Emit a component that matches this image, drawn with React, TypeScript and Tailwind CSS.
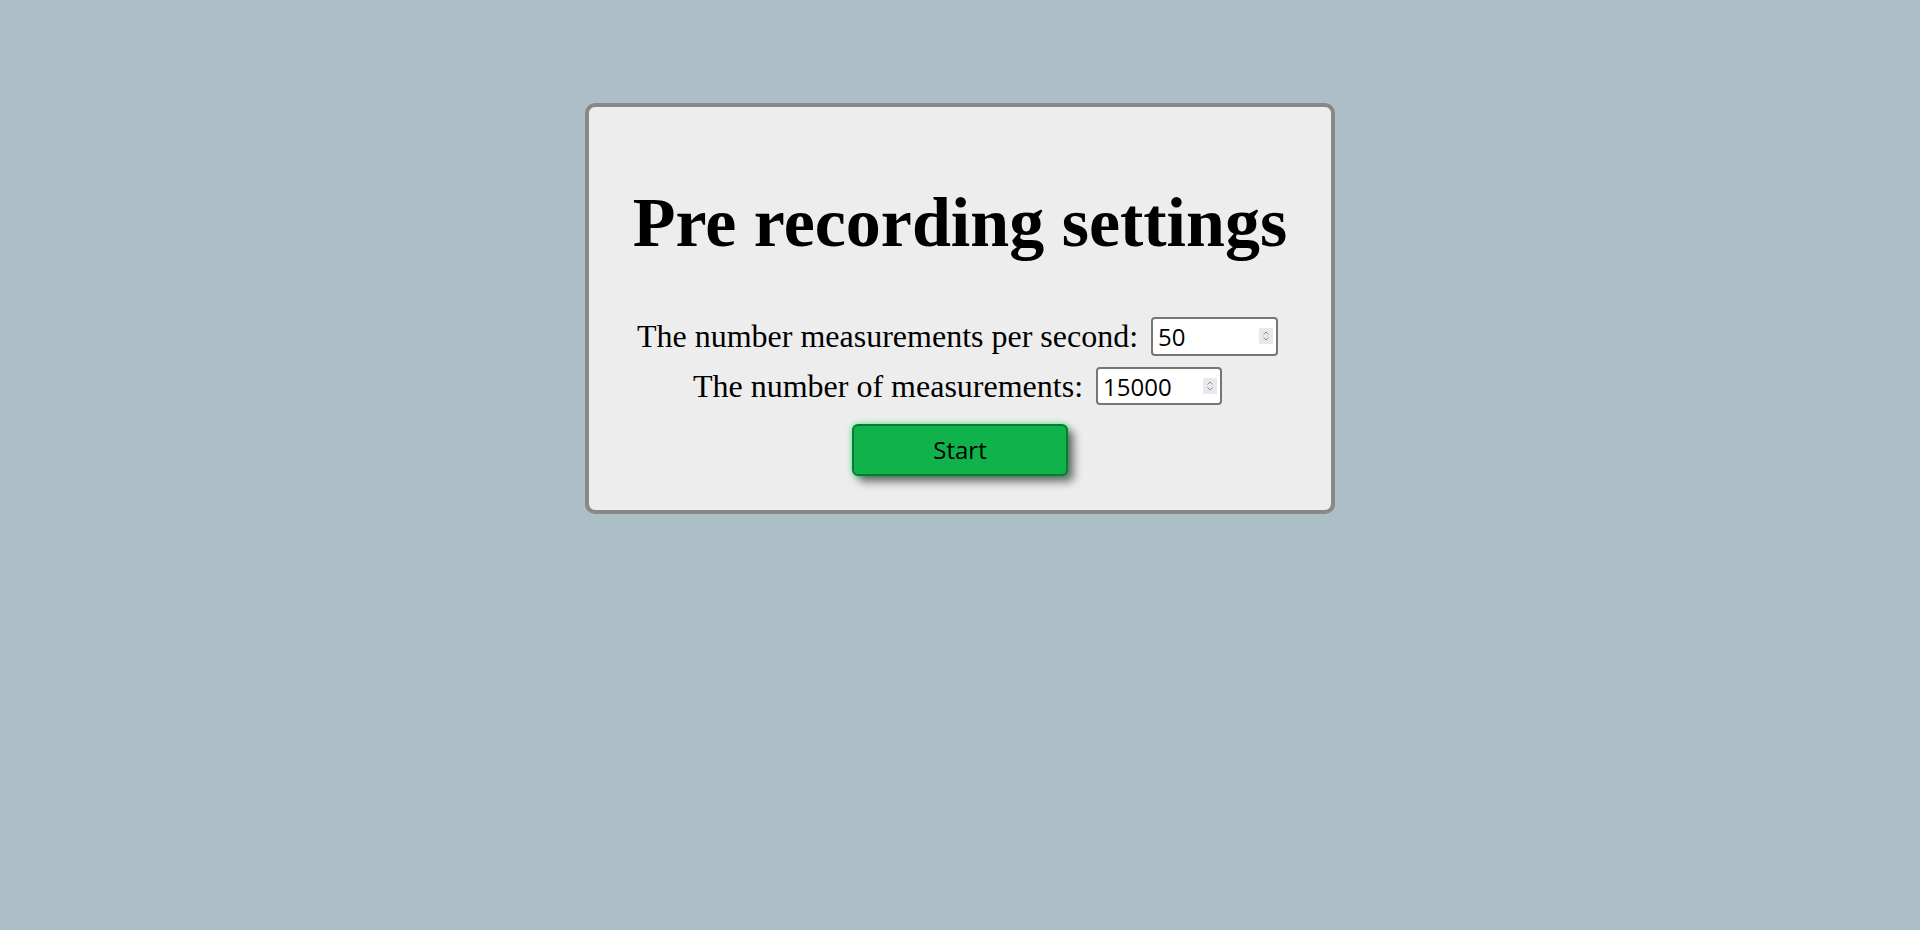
import React from "react";

function Spinner() {
  return (
    <svg
      width="14"
      height="16"
      viewBox="0 0 14 16"
      className="pointer-events-none absolute right-[5px] top-1/2 -translate-y-1/2"
    >
      <rect x="0" y="0" width="14" height="16" fill="#e9e9ed" />
      <path d="M4.5 6.5 L7 4 L9.5 6.5" fill="none" stroke="#8a8a8f" strokeWidth="1" />
      <path d="M4.5 9.5 L7 12 L9.5 9.5" fill="none" stroke="#8a8a8f" strokeWidth="1" />
    </svg>
  );
}

export default function App() {
  const inputCls =
    "block h-full w-full rounded-[4px] border-2 border-[#767676] bg-white pl-[5px] pr-[22px] text-[24px] text-black [font-family:'Open_Sans',sans-serif] [appearance:textfield] [&::-webkit-inner-spin-button]:appearance-none [&::-webkit-outer-spin-button]:appearance-none";
  return (
    <div className="min-h-[930px] w-full bg-[#acbec6] pt-[103px]">
      <div className="mx-auto flex w-[750px] h-[411px] flex-col items-center rounded-[10px] border-4 border-[#888888] bg-[#ededed] pt-[76px]">
        <h1 className="m-0 text-[70px] leading-[80px] font-bold text-black [font-family:'Liberation_Serif','Times_New_Roman',serif]">
          Pre recording settings
        </h1>
        <div className="mt-[48px] flex flex-col items-center [font-family:'Liberation_Serif','Times_New_Roman',serif] text-[32px] text-black">
          <div className="flex h-[50px] items-center gap-[13px] pr-[5px]">
            <span>The number measurements per second:</span>
            <div className="relative h-[39px] w-[127px]">
              <input type="number" defaultValue={50} className={inputCls} />
              <Spinner />
            </div>
          </div>
          <div className="flex h-[50px] items-center gap-[13px] pr-[5px]">
            <span>The number of measurements:</span>
            <div className="relative h-[38px] w-[126px]">
              <input type="number" defaultValue={15000} className={inputCls} />
              <Spinner />
            </div>
          </div>
        </div>
        <button className="mt-[13px] h-[52px] w-[216px] rounded-[6px] border-2 border-[#0a7a35] bg-[#10b24b] text-[24px] text-black [font-family:'Open_Sans',sans-serif] shadow-[6px_6px_8px_rgba(0,0,0,0.5),0_0_6px_#4ee88a]">
          Start
        </button>
      </div>
    </div>
  );
}
